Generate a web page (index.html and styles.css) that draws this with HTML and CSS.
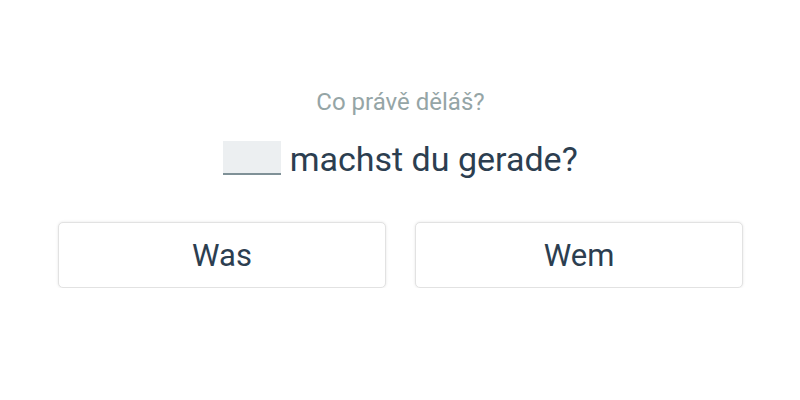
FILE: index.html
```html
<!DOCTYPE html>
<html>
<head>
<meta charset="utf-8">
<link rel="stylesheet" href="styles.css">
</head>
<body>
<main class="exercise">
  <p class="prompt">Co právě děláš?</p>
  <p class="sentence"><span class="blank"></span> machst du gerade?</p>
  <div class="options">
    <button class="option">Was</button>
    <button class="option">Wem</button>
  </div>
</main>
</body>
</html>
```

FILE: styles.css
```css
html, body {
  margin: 0;
  padding: 0;
  background: #ffffff;
}

body {
  font-family: Roboto, "Noto Sans", sans-serif;
  color: #2c3e50;
}

.exercise {
  display: flex;
  flex-direction: column;
  align-items: center;
  padding: 86px 57px 0 58px;
}

.prompt {
  margin: 0;
  font-size: 24px;
  line-height: 32px;
  color: #95a5a6;
}

.sentence {
  margin: 21px 0 0 0;
  font-size: 34px;
  line-height: 40px;
  color: #2c3e50;
}

.blank {
  display: inline-block;
  width: 58px;
  height: 32px;
  background: #eceff1;
  border-bottom: 2px solid #7f9197;
  vertical-align: -4px;
}

.options {
  align-self: stretch;
  display: grid;
  grid-template-columns: 1fr 1fr;
  gap: 29px;
  margin-top: 43px;
}

.option {
  height: 66px;
  background: #ffffff;
  border: 1px solid #e2e2e2;
  border-radius: 5px;
  box-shadow: 0 0 3px rgba(0, 0, 0, 0.1);
  font-family: Roboto, "Noto Sans", sans-serif;
  font-size: 31px;
  color: #2c3e50;
  padding: 0;
}
```
